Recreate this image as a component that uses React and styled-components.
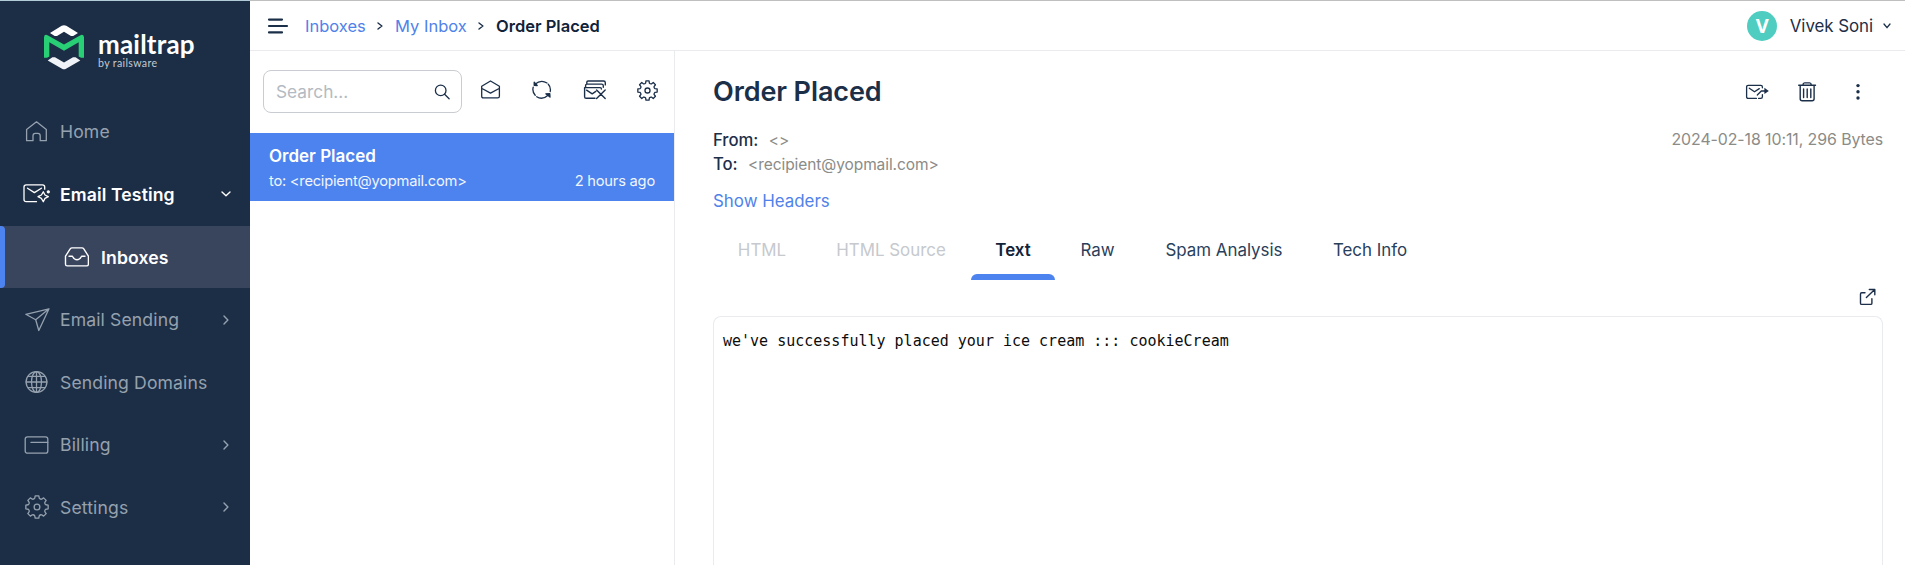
import React from 'react';
import styled, { createGlobalStyle, css } from 'styled-components';

const color = {
  navy: '#1c2e45',
  ink: '#1b2f49',
  muted: '#95a1af',
  blue: '#4c83ee',
  link: '#4f82ea',
  line: '#e9ebee',
  grey: '#8b8b88',
};

const GlobalStyle = createGlobalStyle`
  * { box-sizing: border-box; }
  body { margin: 0; background: #fff; overflow: hidden; }
  h1, p { margin: 0; }
  button, input { font: inherit; background: none; border: 0; padding: 0; margin: 0; }
`;

const Page = styled.div`
  display: flex;
  height: 565px;
  font-family: Inter, 'Liberation Sans', sans-serif;
  color: ${color.ink};
  white-space: nowrap;
`;

/* Sidebar */
const Sidebar = styled.aside`
  flex: none;
  width: 250px;
  background: ${color.navy};
  border-top: 1px solid #b1cbd8;
`;
const Brand = styled.div`
  display: flex;
  height: 99.6px;
  padding: 24px 0 0 44px;
`;
const BrandText = styled.div`
  margin: 5px 0 0 14px;
  color: #fff;
  font-family: Lato, sans-serif;
`;
const BrandName = styled.div`
  font-size: 26px;
  line-height: 28px;
  font-weight: 700;
  letter-spacing: 0.2px;
`;
const BrandBy = styled.div`
  font-size: 10.6px;
  line-height: 10px;
  letter-spacing: 0.35px;
  color: #c3cad3;
`;
const NavItem = styled.a`
  display: flex;
  align-items: center;
  height: 62.6px;
  padding-left: ${(p) => (p.$nested ? '0' : '22px')};
  padding-right: 17px;
  font-size: 17.6px;
  letter-spacing: 0.12px;
  color: ${color.muted};
  ${(p) => p.$strong && css`
    color: #fff;
    font-weight: 600;
    letter-spacing: 0.12px;
  `}
  ${(p) => p.$nested && css`
    background: #39445d;
  `}
`;
const ActiveMark = styled.span`
  width: 5px;
  height: 100%;
  margin-right: 54px;
  background: ${color.blue};
  border-radius: 0 4px 4px 0;
`;
const NavLabel = styled.span`
  flex: 1;
  margin-left: ${(p) => (p.$nested ? '12px' : '8px')};
`;

/* Header */
const Main = styled.main`
  flex: 1;
  min-width: 0;
  display: flex;
  flex-direction: column;
  border-top: 1px solid #bfbfc0;
`;
const Header = styled.header`
  flex: none;
  display: flex;
  align-items: center;
  height: 50px;
  padding: 0 14px 0 17px;
  border-bottom: 1px solid ${color.line};
`;
const Crumbs = styled.nav`
  flex: 1;
  display: flex;
  align-items: center;
  margin-left: 16px;
  font-size: 16.5px;
`;
const Crumb = styled.a`
  color: ${color.link};
`;
const CurrentCrumb = styled.span`
  color: #10233a;
  font-weight: 600;
`;
const CrumbSep = styled.span`
  display: flex;
  width: 29.3px;
  justify-content: center;
`;
const Avatar = styled.span`
  display: flex;
  align-items: center;
  justify-content: center;
  width: 30px;
  height: 30px;
  border-radius: 50%;
  background: #4ecdc0;
  color: #fff;
  font: 700 20px 'Open Sans', sans-serif;
`;
const UserName = styled.span`
  margin: 0 10px 0 12.5px;
  font-size: 16.9px;
  letter-spacing: -0.06px;
`;

/* Message list */
const Body = styled.div`
  flex: 1;
  display: flex;
  min-height: 0;
`;
const List = styled.section`
  flex: none;
  width: 425px;
  border-right: 1px solid ${color.line};
`;
const Toolbar = styled.div`
  display: flex;
  height: 82px;
  padding: 19px 16px 0 13px;
`;
const SearchBox = styled.label`
  display: flex;
  align-items: center;
  width: 199px;
  height: 43px;
  padding: 0 11px 0 12px;
  border: 1px solid #c9ccd1;
  border-radius: 8px;
`;
const SearchInput = styled.input`
  flex: 1;
  width: 0;
  outline: none;
  font-size: 17.3px;
  &::placeholder { color: #b4bac2; opacity: 1; }
`;
const Tools = styled.div`
  flex: 1;
  display: flex;
  justify-content: space-between;
  align-items: center;
  height: 40px;
  margin-left: 17px;
`;
const MailRow = styled.article`
  height: 68px;
  padding: 12px 19px 0 19px;
  background: ${color.blue};
  color: #fff;
`;
const MailSubject = styled.div`
  font-size: 17px;
  line-height: 22px;
  font-weight: 600;
`;
const MailMeta = styled.div`
  display: flex;
  justify-content: space-between;
  margin-top: 3px;
  font-size: 14.7px;
  line-height: 22px;
  color: #f1f5fe;
`;
const Recipient = styled.span`
  letter-spacing: -0.24px;
`;
const Ago = styled.span`
  letter-spacing: -0.22px;
`;

/* Message details */
const Detail = styled.section`
  flex: 1;
  display: flex;
  flex-direction: column;
  padding: 0 22px 0 38px;
`;
const TitleRow = styled.div`
  display: flex;
  justify-content: space-between;
  align-items: center;
  height: 81px;
`;
const Title = styled.h1`
  font-size: 27px;
  line-height: 32px;
  font-weight: 600;
  letter-spacing: -0.1px;
`;
const Actions = styled.div`
  display: flex;
  align-items: center;
  gap: 28px;
  margin-right: 16px;
`;
const Info = styled.div`
  display: flex;
  justify-content: space-between;
  line-height: 24px;
  margin-top: -4px;
`;
const Address = styled.p`
  display: flex;
  align-items: baseline;
  height: 24px;
  font-size: 16.7px;
  font-weight: 500;
  letter-spacing: -0.05px;
`;
const Soft = styled.span`
  font-size: 15.5px;
  font-weight: 400;
  letter-spacing: -0.08px;
  color: ${color.grey};
  margin-left: 10.5px;
`;
const Stamp = styled.span`
  font-size: 15.9px;
  letter-spacing: -0.08px;
  color: ${color.grey};
`;
const HeadersLink = styled.a`
  margin-top: 13px;
  font-size: 16.9px;
  line-height: 24px;
  color: ${color.link};
`;
const Tabs = styled.div`
  display: flex;
  height: 67px;
`;
const Tab = styled.button`
  display: flex;
  flex-direction: column;
  justify-content: space-between;
  padding-top: 26px;
  width: ${(p) => p.$width}px;
  font-size: 16.9px;
  line-height: 22px;
  align-items: center;
  color: ${(p) => (p.disabled ? '#c6c9cd' : '#29405b')};
  font-weight: ${(p) => (p.$active ? 600 : 400)};
  ${(p) => p.$active && css`color: #10233a;`}
  &::after {
    content: '';
    width: 100%;
    height: 6px;
    border-radius: 6px 6px 0 0;
    background: ${(p) => (p.$active ? color.blue : 'transparent')};
  }
`;
const ContentBar = styled.div`
  display: flex;
  justify-content: flex-end;
  height: 36px;
  padding: 8px 7px 0 0;
`;
const Content = styled.pre`
  flex: 1;
  margin: 0;
  padding: 16px 9px;
  border: 1px solid ${color.line};
  border-bottom: 0;
  border-radius: 8px 8px 0 0;
  color: #0c0c0c;
  font: 15px/17px 'DejaVu Sans Mono', monospace;
`;

/* Icons */
const Svg = styled.svg`
  flex: none;
  display: block;
  fill: none;
  stroke: currentColor;
  stroke-width: ${(p) => p.$stroke || 1.3};
  stroke-linecap: round;
  stroke-linejoin: round;
`;
const Icon = ({ w = 30, h = 28, s, children }) => (
  <Svg width={w} height={h} viewBox={`0 0 ${w} ${h}`} $stroke={s}>{children}</Svg>
);
const Logo = () => (
  <Svg width="40" height="45" viewBox="0 0 40 45">
    <g stroke="none">
      <path fill="#fff" d="M6 7.9 17.7.8q2.3-1.3 4.6 0L34 7.9 29.2 11H27L20 6.8 13 11h-2.3z" />
      <path fill="#f0f3f8" d="M3.7 35.5 8.4 32.3H11L20 37.5 29 32.3h2.6l4.7 3.2L22 43.8q-2 1.1-4 0z" />
      <path fill="#28cf75" d="M0 32.8V12.2q.4-3.5 4-1.8L20 19.6 36 10.4q3.5-1.7 4 1.8V32.8H37L34.7 31.4V17.3L20 25.7 5.3 17.3V31.4L3 32.8z" />
    </g>
  </Svg>
);
const Chevron = ({ down, tall = 9, s = 1.4 }) => (down
  ? <Icon w={tall} h={6} s={s}><path d={`M1 1 ${tall / 2} 4.7 ${tall - 1} 1`} /></Icon>
  : <Icon w={6} h={tall} s={s}><path d={`M1 1 4.9 ${tall / 2} 1 ${tall - 1}`} /></Icon>);
const ChevronSlot = styled.span`
  display: flex;
  justify-content: center;
  width: 15px;
`;

const gearPath = (c, r, inner) => {
  const pts = [];
  for (let i = 0; i < 8; i += 1) {
    const a = (i * Math.PI) / 4 - Math.PI / 2;
    [[-0.25, inner], [-0.16, r], [0.16, r], [0.25, inner]].forEach(([d, q]) => {
      pts.push(`${(c + Math.cos(a + d) * q).toFixed(2)} ${(c + Math.sin(a + d) * q).toFixed(2)}`);
    });
  }
  return pts.reduce((d, p, i) => {
    if (i === 0) return `M${p}`;
    return i % 4 === 0 ? `${d}A2.3 2.3 0 0 0 ${p}` : `${d}L${p}`;
  }, '') + `A2.3 2.3 0 0 0 ${pts[0]}Z`;
};
const Gear = ({ size, s }) => (
  <Icon w={size} h={size} s={s}>
    <path d={gearPath(size / 2, size / 2 - 0.7, size / 2 - 2.9)} />
    <circle cx={size / 2} cy={size / 2} r={size * 0.12} />
  </Icon>
);
const HomeIcon = () => (
  <Icon><path d="M4.6 11.6 14.5 3.8l9.8 7.8v11.1h-6.1v-5q0-2.4-2.3-2.4h-2.6q-2.3 0-2.3 2.4v5H4.6z" /></Icon>
);
const TestingIcon = () => (
  <Icon s={1.3}>
    <path d="M14.5 21.7H4.2Q2 21.7 2 19.5V7Q2 4.8 4.2 4.8H20.5Q22.7 4.8 22.7 7V9.2M5.5 8.2 12.4 12.6 19.4 8.2M21.3 11.8 23 15l3.3 1.7L23 18.4 21.3 21.7 19.4 18.4 16 16.7 19.4 15z" />
    <circle cx="26.3" cy="11.8" r="1" fill="currentColor" />
  </Icon>
);
const InboxIcon = () => (
  <Icon s={1.4}>
    <path d="M6.5 13.1 11.2 5.9q.7-1 1.8-1h10q1.1 0 1.8 1l4.6 7.2v8.1q0 1.7-1.7 1.7H8.2q-1.7 0-1.7-1.7zM10 13.2h3.2c.8 0 .9 3.6 4.8 3.6s4-3.6 4.8-3.6H26" />
  </Icon>
);
const PlaneIcon = () => (
  <Icon><path d="M3.8 8.3 27 2.8 16.8 24.5 13.7 13.8zM13.7 13.8 27 2.8" /></Icon>
);
const GlobeIcon = () => (
  <Icon s={1.3}>
    <circle cx="14.5" cy="14" r="10.4" />
    <ellipse cx="14.5" cy="14" rx="5" ry="10.4" />
    <path d="M14.5 3.6v20.8M4.1 14h20.8M6.2 8.3h16.6M6.2 19.7h16.6" />
  </Icon>
);
const CardIcon = () => (
  <Icon>
    <rect x="3.2" y="5.8" width="22.6" height="16.4" rx="2.3" />
    <path d="M9 11.4h16.7" />
  </Icon>
);
const SettingsSlot = styled.span`
  display: flex;
  width: 30px;
  padding-left: 2.5px;
`;

const nav = [
  { label: 'Home', icon: <HomeIcon /> },
  { label: 'Email Testing', icon: <TestingIcon />, strong: true, chevron: 'down' },
  { label: 'Inboxes', icon: <InboxIcon />, strong: true, nested: true },
  { label: 'Email Sending', icon: <PlaneIcon />, chevron: 'right' },
  { label: 'Sending Domains', icon: <GlobeIcon /> },
  { label: 'Billing', icon: <CardIcon />, chevron: 'right' },
  { label: 'Settings', icon: <SettingsSlot><Gear size={24} /></SettingsSlot>, chevron: 'right' },
];
const tabs = [
  { label: 'HTML', width: 98, disabled: true },
  { label: 'HTML Source', width: 160, disabled: true },
  { label: 'Text', width: 84, active: true },
  { label: 'Raw', width: 85 },
  { label: 'Spam Analysis', width: 168 },
  { label: 'Tech Info', width: 124 },
];

export default function App() {
  return (
    <Page>
      <GlobalStyle />
      <Sidebar>
        <Brand>
          <Logo />
          <BrandText>
            <BrandName>mailtrap</BrandName>
            <BrandBy>by railsware</BrandBy>
          </BrandText>
        </Brand>
        {nav.map((n) => (
          <NavItem key={n.label} $strong={n.strong} $nested={n.nested}>
            {n.nested && <ActiveMark />}
            {n.icon}
            <NavLabel $nested={n.nested}>{n.label}</NavLabel>
            {n.chevron && (
              <ChevronSlot><Chevron down={n.chevron === 'down'} tall={10} /></ChevronSlot>
            )}
          </NavItem>
        ))}
      </Sidebar>
      <Main>
        <Header>
          <Icon w={22} h={16} s={2.2}><path d="M2 1.6h13M2 8h18M2 14.4h13" /></Icon>
          <Crumbs>
            <Crumb>Inboxes</Crumb>
            <CrumbSep><Chevron tall={8} /></CrumbSep>
            <Crumb>My Inbox</Crumb>
            <CrumbSep><Chevron tall={8} /></CrumbSep>
            <CurrentCrumb>Order Placed</CurrentCrumb>
          </Crumbs>
          <Avatar>V</Avatar>
          <UserName>Vivek Soni</UserName>
          <Chevron down tall={8} s={1.3} />
        </Header>
        <Body>
          <List>
            <Toolbar>
              <SearchBox>
                <SearchInput placeholder="Search..." />
                <Icon w={16} h={16} s={1.3}>
                  <circle cx="6.7" cy="6.4" r="5.3" />
                  <path d="m10.6 10.3 4.5 4.4" />
                </Icon>
              </SearchBox>
              <Tools>
                <Icon w={23} h={22} s={1.3}>
                  <path d="M2.7 7.3 11.5 2l8.9 5.3v9.9q0 1.7-1.7 1.7H4.4q-1.7 0-1.7-1.7zM3 9.5l8.5 4.6 8.6-4.6" />
                </Icon>
                <Icon w={22} h={22} s={1.3}>
                  <path d="M3.9 5.2Q10 .1 16 4M17.3 5.2q2.8 3 1.9 7.3M2.2 8.2q-1.2 4.6 2 8M5.7 17.8q5.7 3.5 11-1.4" />
                  <path fill="currentColor" d="M3.2 3.3v3l3 .2zM19 18.1l-.2-3.4-4 .1z" />
                </Icon>
                <Icon w={25} h={22} s={1.4}>
                  <path d="M12 19.3H3.2q-1.6 0-1.6-1.6V8.6H17.2q1.2 0 1.2 1.2v.3M3.6 11.2l5.6 3.6 3.6-2.4M2.6 8.2V6.4q0-1.3 1.3-1.3H18.6q1.7 0 1.7 1.7v1.4M3.8 4.8V3.3Q3.8 2 5.1 2H20.6q1.7 0 1.7 1.7v2.2M13.6 11l8.6 8.4M22.2 11l-8.6 8.4" />
                </Icon>
                <Gear size={21} s={1.3} />
              </Tools>
            </Toolbar>
            <MailRow>
              <MailSubject>Order Placed</MailSubject>
              <MailMeta>
                <Recipient>to: &lt;recipient@yopmail.com&gt;</Recipient>
                <Ago>2 hours ago</Ago>
              </MailMeta>
            </MailRow>
          </List>
          <Detail>
            <TitleRow>
              <Title>Order Placed</Title>
              <Actions>
                <Icon w={24} h={20} s={1.3}>
                  <path d="M11.4 16.4H3.2Q1.6 16.4 1.6 14.8V4.9q0-1.6 1.6-1.6H15.8q1.6 0 1.6 1.6v.9M4.3 6.2l5.2 3.6 4.8-3.2M12.3 13l4-4h4M13.6 16.4h2.2q1.6 0 1.6-1.6V12.6" />
                  <path fill="currentColor" stroke="none" d="m19.4 5.7 4.4 3.2-4.4 3.2z" />
                </Icon>
                <Icon w={20} h={22} s={1.4}>
                  <path d="M1.7 4.2h16.8M6 3.7Q6 1.9 7.6 1.9h5q1.6 0 1.6 1.8M3.2 4.5v13.2q0 2 2 2h9.9q2 0 2-2V4.5M6.6 8v8.6M10.2 8v8.6M13.8 8v8.6" />
                </Icon>
                <Icon w={22} h={20}>
                  <g fill="currentColor" stroke="none">
                    <circle cx="13" cy="3.6" r="1.7" /><circle cx="13" cy="9.8" r="1.7" /><circle cx="13" cy="16" r="1.7" />
                  </g>
                </Icon>
              </Actions>
            </TitleRow>
            <Info>
              <div>
                <Address>From: <Soft>&lt;&gt;</Soft></Address>
                <Address>To: <Soft>&lt;recipient@yopmail.com&gt;</Soft></Address>
              </div>
              <Stamp>2024-02-18 10:11, 296 Bytes</Stamp>
            </Info>
            <HeadersLink>Show Headers</HeadersLink>
            <Tabs>
              {tabs.map((t) => (
                <Tab key={t.label} $width={t.width} $active={t.active} disabled={t.disabled}>{t.label}</Tab>
              ))}
            </Tabs>
            <ContentBar>
              <Icon w={18} h={18} s={1.4}>
                <path d="M7 4.7H3.7Q2.5 4.7 2.5 5.9v9.3q0 1.2 1.2 1.2h9q1.2 0 1.2-1.2v-4.4M8.4 9.6 16.7 1.6M11.3 1.5h5.5V6.7" />
              </Icon>
            </ContentBar>
            <Content>we've successfully placed your ice cream ::: cookieCream</Content>
          </Detail>
        </Body>
      </Main>
    </Page>
  );
}
